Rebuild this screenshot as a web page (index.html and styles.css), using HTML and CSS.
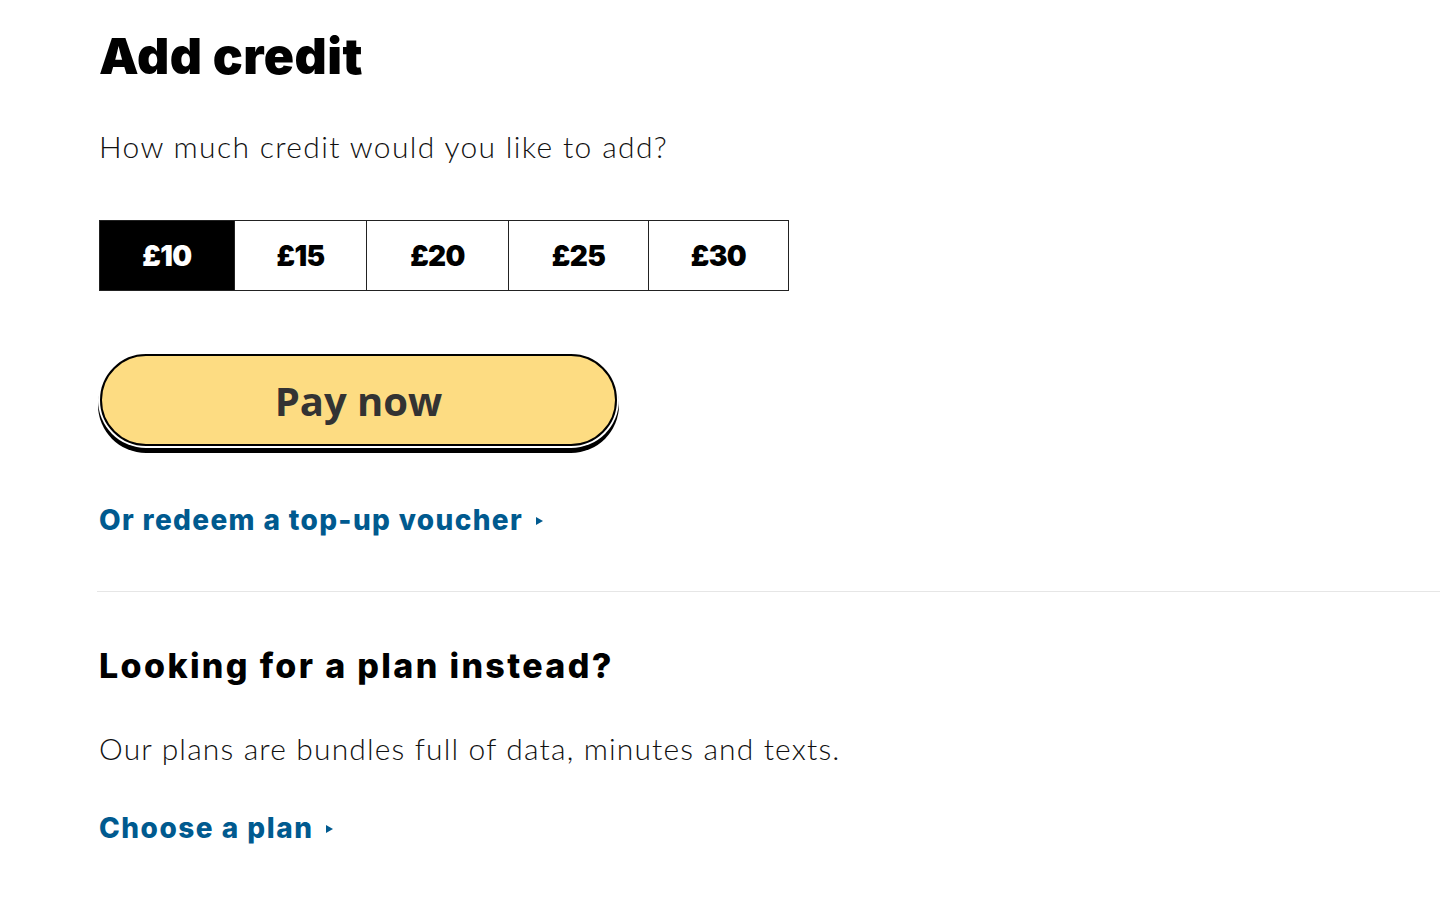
FILE: index.html
```html
<!DOCTYPE html>
<html lang="en">
<head>
<meta charset="utf-8">
<title>Add credit</title>
<link rel="stylesheet" href="styles.css">
</head>
<body>
<main class="page">
  <section class="topup">
    <h1 class="title">Add credit</h1>
    <p class="lead">How much credit would you like to add?</p>
    <div class="amounts" role="radiogroup">
      <button class="amount amount--active w1">£10</button>
      <button class="amount w2">£15</button>
      <button class="amount w3">£20</button>
      <button class="amount w4">£25</button>
      <button class="amount w5">£30</button>
    </div>
    <div class="pay-wrap">
      <button class="pay">Pay now</button>
    </div>
    <a class="link link--voucher" href="#">Or redeem a top-up voucher <span class="arrow"></span></a>
  </section>
  <hr class="divider">
  <section class="plans">
    <h2 class="subtitle">Looking for a plan instead?</h2>
    <p class="lead">Our plans are bundles full of data, minutes and texts.</p>
    <a class="link link--plan" href="#">Choose a plan <span class="arrow"></span></a>
  </section>
</main>
</body>
</html>
```
FILE: styles.css
```css
* { box-sizing: border-box; }
html, body { margin: 0; padding: 0; background: #fff; }
body { font-family: "Inter", "Liberation Sans", sans-serif; color: #000; }
.page { padding-top: 24px; }
.topup, .plans { padding-left: 99px; }
.title {
  margin: 0;
  font-size: 50px;
  font-weight: 900;
  line-height: 64px;
  letter-spacing: 0.4px;
}
.lead {
  margin: 0;
  font-family: "Lato", sans-serif;
  font-weight: 300;
  font-size: 30px;
  line-height: 40px;
  letter-spacing: 1.35px;
  color: #111;
}
.topup .lead { margin-top: 38px; }
.plans .lead { letter-spacing: 1.15px; }
.amounts {
  display: flex;
  margin-top: 54px;
  width: 690px;
  height: 71px;
  border: 1px solid #222;
}
.amount {
  font-family: "Inter", sans-serif;
  font-weight: 900;
  font-size: 28px;
  letter-spacing: -0.6px;
  background: #fff;
  color: #000;
  border: 0;
  border-left: 1px solid #222;
  padding: 0;
  cursor: pointer;
}
.amount:first-child { border-left: 0; }
.amount--active { background: #000; color: #fff; }
.w1 { width: 134px; }
.w2 { width: 132px; }
.w3 { width: 142px; }
.w4 { width: 140px; }
.w5 { flex: 1; }
.pay-wrap { margin-top: 63px; padding-left: 1px; }
.pay {
  display: block;
  width: 517px;
  height: 92px;
  border: 2px solid #000;
  border-radius: 46px;
  background: #fddc82;
  box-shadow: 0 0 0 2px #fff, 0 5px 0 2px #000;
  font-family: "Open Sans", "Noto Sans", sans-serif;
  font-weight: 700;
  font-size: 40px;
  color: #333;
  cursor: pointer;
}
.link {
  display: inline-flex;
  align-items: center;
  gap: 13px;
  font-family: "Inter", sans-serif;
  font-weight: 800;
  font-size: 28px;
  line-height: 40px;
  color: #005a8f;
  text-decoration: none;
}
.link--voucher { margin-top: 54px; letter-spacing: 1.35px; }
.link--plan { margin-top: 40px; letter-spacing: 1.5px; }
.arrow {
  width: 0; height: 0;
  border-top: 4px solid transparent;
  border-bottom: 4px solid transparent;
  border-left: 7px solid #005a8f;
  margin-top: 2px;
}
.divider {
  margin: 51px 0 0 97px;
  border: 0;
  border-top: 1px solid #e6e6e6;
}
.plans { padding-top: 52px; }
.subtitle {
  margin: 0;
  font-size: 34px;
  font-weight: 800;
  line-height: 44px;
  letter-spacing: 2.35px;
}
.plans .lead { margin-top: 40px; }
```
